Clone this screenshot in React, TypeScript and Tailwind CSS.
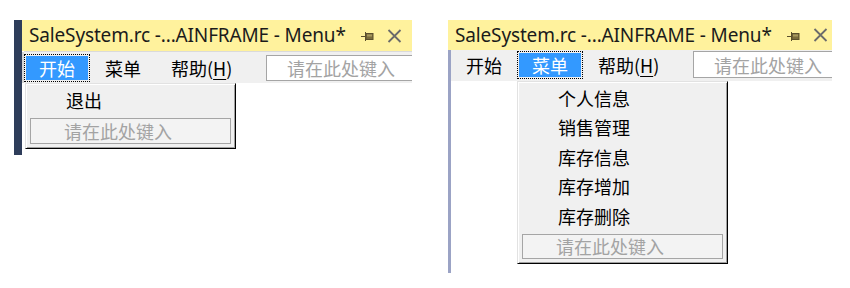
import React from "react";

const cjk = { fontFamily: '"Noto Sans CJK SC", "Noto Sans", sans-serif' };
const latin = { fontFamily: '"Noto Sans", "Noto Sans CJK SC", sans-serif' };

function PinIcon() {
  return (
    <svg width="13" height="11" viewBox="0 0 13 11" className="block">
      <line x1="0" y1="5.5" x2="5" y2="5.5" stroke="#5a4f2c" strokeWidth="1" />
      <line x1="4.5" y1="1" x2="4.5" y2="10" stroke="#5a4f2c" strokeWidth="1" />
      <rect x="5" y="2.5" width="7" height="6" fill="#7a6c3c" stroke="#5a4f2c" strokeWidth="1" />
      <rect x="6" y="3.5" width="5" height="2" fill="#a8995e" />
    </svg>
  );
}

function CloseIcon() {
  return (
    <svg width="15" height="14" viewBox="0 0 15 14" className="block">
      <path d="M1.5 1 L13.5 13 M13.5 1 L1.5 13" stroke="#6b6b6b" strokeWidth="1.8" />
    </svg>
  );
}

function TitleBar({ h }: { h: string }) {
  return (
    <div className={`${h} bg-[#fff29d] flex items-center pl-[7px] text-[#1b1b1b]`}>
      <span className="text-[19px] leading-none whitespace-nowrap tracking-[-0.15px]" style={latin}>
        SaleSystem.rc -...AINFRAME - Menu*
      </span>
      <div className="ml-[15px] mt-[2px]">
        <PinIcon />
      </div>
      <div className="ml-[13px]">
        <CloseIcon />
      </div>
    </div>
  );
}

function MenuItem({ label, active }: { label: React.ReactNode; active?: boolean }) {
  if (active) {
    return (
      <div className="h-[28px] border border-dotted border-black p-px">
        <div className="h-full bg-[#3399ff] text-white flex items-center px-[13px] text-[18px] leading-none whitespace-nowrap" style={cjk}>
          {label}
        </div>
      </div>
    );
  }
  return (
    <div className="h-[28px] flex items-center px-[15px] text-[18px] leading-none text-black whitespace-nowrap" style={cjk}>
      {label}
    </div>
  );
}

function TypeHere({ cls, pl }: { cls: string; pl: string }) {
  return (
    <div className={`${cls} border-[#a5a5a5] flex items-center ${pl} text-[18px] leading-none text-[#a3a3a3] whitespace-nowrap overflow-hidden`} style={cjk}>
      请在此处键入
    </div>
  );
}

function MenuBar({ active, h, top, inputCls }: { active: number; h: string; top: string; inputCls: string }) {
  return (
    <div className={`${h} bg-[#f0f0f0] flex items-start ${top}`}>
      <div className="w-[66px] shrink-0">
        <MenuItem label="开始" active={active === 0} />
      </div>
      <div className="w-[66px] shrink-0">
        <MenuItem label="菜单" active={active === 1} />
      </div>
      <div className="w-[91px] shrink-0">
        <MenuItem
          label={
            <span className="whitespace-nowrap">
              帮助(<span className="underline underline-offset-[3px]">H</span>)
            </span>
          }
        />
      </div>
      <TypeHere cls={`ml-[19px] flex-1 min-w-0 bg-white border-l border-t border-b ${inputCls}`} pl="pl-[20px]" />
    </div>
  );
}

function Dropdown({ items, inputH }: { items: string[]; inputH: string }) {
  return (
    <div className="w-[211px] bg-[#f0f0f0] border-l border-t border-[#e2e2e2] border-r border-b border-r-black border-b-black shadow-[inset_1px_1px_0_#ffffff,inset_-1px_-1px_0_#a0a0a0] pt-[1px] pb-[4px] px-[4px]">
      {items.map((it) => (
        <div key={it} className="h-[29.5px] flex items-center pl-[36px] text-[18px] leading-none text-black" style={cjk}>
          {it}
        </div>
      ))}
      <TypeHere cls={`mt-[3px] ${inputH} bg-[#f3f3f3] border`} pl="pl-[33px]" />
    </div>
  );
}

export default function App() {
  return (
    <div className="w-[850px] h-[288px] bg-white relative overflow-hidden">
      <div className="flex items-start pt-[20px]">
        {/* left panel */}
        <div className="ml-[14px] flex items-start">
          <div className="w-[8px] h-[135px] bg-[#2e3d5a]" />
          <div className="w-[390px] relative">
            <TitleBar h="h-[31px]" />
            <div className="h-px bg-[#dadada] ml-[2px]" />
            <div className="border-l-2 border-[#d6d6d6]">
              <MenuBar active={0} h="h-[31px]" top="pt-[2px]" inputCls="h-[26px] mt-[1px]" />
            </div>
            <div className="absolute left-[3px] top-[63px]">
              <Dropdown items={["退出"]} inputH="h-[26px]" />
            </div>
          </div>
        </div>
        {/* right panel */}
        <div className="ml-[36px] w-[384px] relative">
          <TitleBar h="h-[30px]" />
          <div className="flex">
            <div className="w-[3px] h-[223px] bg-[#9ba3c5]" />
            <div className="flex-1 min-w-0">
              <MenuBar active={1} h="h-[31px]" top="pt-[1px]" inputCls="h-[27px]" />
            </div>
          </div>
          <div className="absolute left-[69px] top-[61px]">
            <Dropdown items={["个人信息", "销售管理", "库存信息", "库存增加", "库存删除"]} inputH="h-[25px]" />
          </div>
        </div>
      </div>
    </div>
  );
}
